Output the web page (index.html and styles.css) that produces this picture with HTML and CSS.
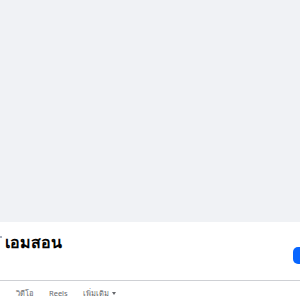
FILE: index.html
```html
<!DOCTYPE html>
<html lang="th">
<head>
<meta charset="utf-8">
<link rel="stylesheet" href="styles.css">
</head>
<body>
<div class="cover"></div>
<div class="profile">
  <div class="head">
    <div class="title"><span class="mark"></span><h1 class="name">เอมสอน</h1></div>
    <button class="btn"></button>
  </div>
  <div class="divider"></div>
  <nav class="tabs">
    <span class="tab">วิดีโอ</span>
    <span class="tab">Reels</span>
    <span class="tab">เพิ่มเติม <span class="caret"></span></span>
  </nav>
</div>
</body>
</html>
```
FILE: styles.css
```css
html, body { margin: 0; padding: 0; }
body { width: 300px; height: 300px; overflow: hidden; background: #fff; font-family: "Noto Sans", "Liberation Sans", sans-serif; }
.cover { height: 222px; background: #f0f2f5; }
.profile { background: #fff; }
.head { display: flex; justify-content: space-between; align-items: flex-start; height: 58px; }
.title { display: flex; align-items: flex-start; gap: 3px; }
.mark { margin-top: 14px; width: 2px; height: 2px; border-radius: 1px; background: #8a93a6; }
.name { margin: 0; padding-top: 6px; font-size: 16px; font-weight: 700; color: #050505; line-height: 28px; white-space: nowrap; }
.btn { margin-top: 25px; width: 14px; height: 17px; margin-right: -7px; border: 0; border-radius: 5px; background: #0866ff; padding: 0; }
.divider { height: 1px; background: #ced0d4; }
.tabs { display: flex; gap: 15px; padding-left: 16px; padding-top: 6px; font-size: 7.5px; color: #65676b; }
.tab { display: inline-flex; align-items: center; gap: 3px; }
.caret { width: 0; height: 0; border-left: 2.5px solid transparent; border-right: 2.5px solid transparent; border-top: 3px solid #65676b; }
```
